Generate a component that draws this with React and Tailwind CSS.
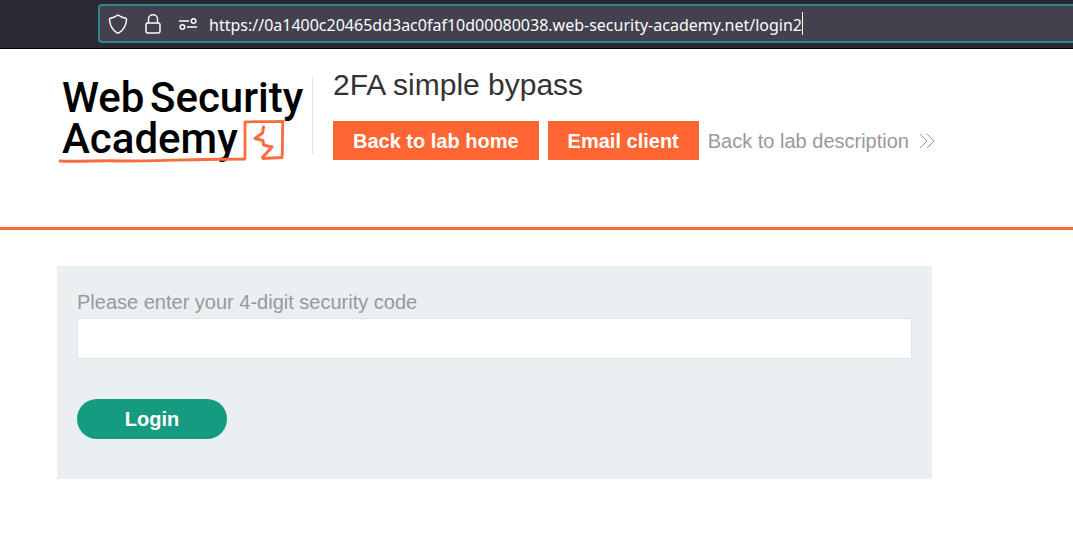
function ShieldIcon() {
  return (
    <svg className="h-5 w-5" viewBox="0 0 20 20" fill="none" stroke="currentColor" strokeWidth="1.5" strokeLinejoin="round" aria-hidden="true">
      <path d="M10 1 C8.5 2.2 4.5 3.8 2.4 4.2 C1.7 4.4 1.4 5 1.5 5.8 C2 12 4.500 16 9 18.800 Q10 19.400 11 18.800 C15.500 16 18 12 18.500 5.800 C18.600 5 18.300 4.400 17.600 4.200 C15.500 3.800 11.500 2.200 10 1 Z" />
    </svg>
  );
}

function LockIcon() {
  return (
    <svg className="h-5 w-4" viewBox="0 0 16 20" fill="none" stroke="currentColor" strokeWidth="1.5" aria-hidden="true">
      <rect x="1" y="9" width="14" height="10" rx="2" />
      <path d="M3.5 9 V5 A4.5 4.2 0 0 1 12.5 5 V9" />
    </svg>
  );
}

function PermissionsIcon() {
  return (
    <svg className="h-3 w-[18px]" viewBox="0 0 18 12" fill="none" stroke="currentColor" strokeWidth="1.5" aria-hidden="true">
      <path d="M0 3 H10 M8 9 H18" />
      <circle cx="14.6" cy="3" r="2.3" />
      <circle cx="3.400" cy="9" r="2.3" />
    </svg>
  );
}

function Logo() {
  return (
    <a href="#academy" aria-label="Web Security Academy" className="block shrink-0">
      <svg className="h-[92px] w-[248px] overflow-visible" viewBox="0 0 248 92" aria-hidden="true">
        <g fill="#000" fontFamily="Roboto, 'Liberation Sans', sans-serif" fontWeight="500" fontSize="42">
          <text x="4" y="39">Web</text>
          <text x="92" y="39">Security</text>
          <text x="4" y="80">Academy</text>
        </g>
        <g fill="none" stroke="#f96c3c" strokeLinejoin="round" strokeLinecap="round">
          <path strokeWidth="2.8" d="M2 88 C24 89 42 87 65 88 C101 88 137 86 187 86 L187 49 C199 48 213 49 225 48.500 C224 60 225 73 224 84.500 C217 85 211 85 205 85.500" />
          <path strokeWidth="3" d="M205.500 54 L204.500 60 L197 65.500 L205 67.500 L205.500 72 L214 74 L204.500 84.500" />
        </g>
      </svg>
    </a>
  );
}

function DoubleChevron() {
  return (
    <svg className="h-4 w-4" viewBox="0 0 16 16" fill="none" stroke="currentColor" strokeWidth="1" aria-hidden="true">
      <path d="M1 1 L8 8 L1 15 M8 1 L15 8 L8 15" />
    </svg>
  );
}

export default function App() {
  return (
    <div className="min-h-screen bg-white font-['Liberation_Sans',Arial,sans-serif] text-xl">
      <div className="flex h-[49px] border-b border-black bg-[#2b2a33] pt-1 pb-1 pl-[98px]">
        <div className="flex h-[39px] flex-1 items-center rounded-l border-2 border-r-0 border-[#2e8496] bg-[#42414d] pl-2 text-[#fbfbfe]">
          <ShieldIcon />
          <span className="ml-[17px]"><LockIcon /></span>
          <span className="mr-3 ml-[18px]"><PermissionsIcon /></span>
          <input
            aria-label="Address"
            defaultValue="https://0a1400c20465dd3ac0faf10d00080038.web-security-academy.net/login2"
            className="field-sizing-content bg-transparent pt-0.5 font-['Noto_Sans','Open_Sans',sans-serif] text-base leading-6 outline-none"
          />
          <span className="h-[23px] w-px bg-white" />
        </div>
      </div>

      <header className="flex h-[181px] items-start border-b-3 border-[#f36f3a] pt-6 pl-[58px]">
        <Logo />
        <div className="mt-1 ml-1.5 h-[77px] w-px shrink-0 bg-[#e2e2e2]" />
        <div className="-mt-2 ml-5">
          <h1 className="text-[30px] leading-10 text-[#333332]">2FA simple bypass</h1>
          <div className="mt-4 flex items-center gap-[9px] whitespace-nowrap">
            <a href="#lab" className="bg-[#ff6633] px-5 pt-px text-xl leading-[38px] font-bold text-white">Back to lab home</a>
            <a href="#email" className="bg-[#ff6633] px-5 pt-px text-xl leading-[38px] font-bold text-white">Email client</a>
            <a href="#description" className="flex items-center gap-2.5 text-[#999999]">
              Back to lab description
              <DoubleChevron />
            </a>
          </div>
        </div>
      </header>

      <main className="pt-9 pr-[141px] pl-[57px]">
        <form className="bg-[#eaeff2] px-5 pt-6 pb-10" onSubmit={(event) => event.preventDefault()}>
          <label htmlFor="code" className="block leading-6 text-[#999999]">Please enter your 4-digit security code</label>
          <input id="code" type="text" className="mt-1 block h-[41px] w-full border border-[#dfe3e5] bg-white px-3 text-[#333332] outline-none" />
          <button type="submit" className="mt-10 h-10 w-[150px] rounded-full bg-[#159b80] font-bold text-white">Login</button>
        </form>
      </main>
    </div>
  );
}
